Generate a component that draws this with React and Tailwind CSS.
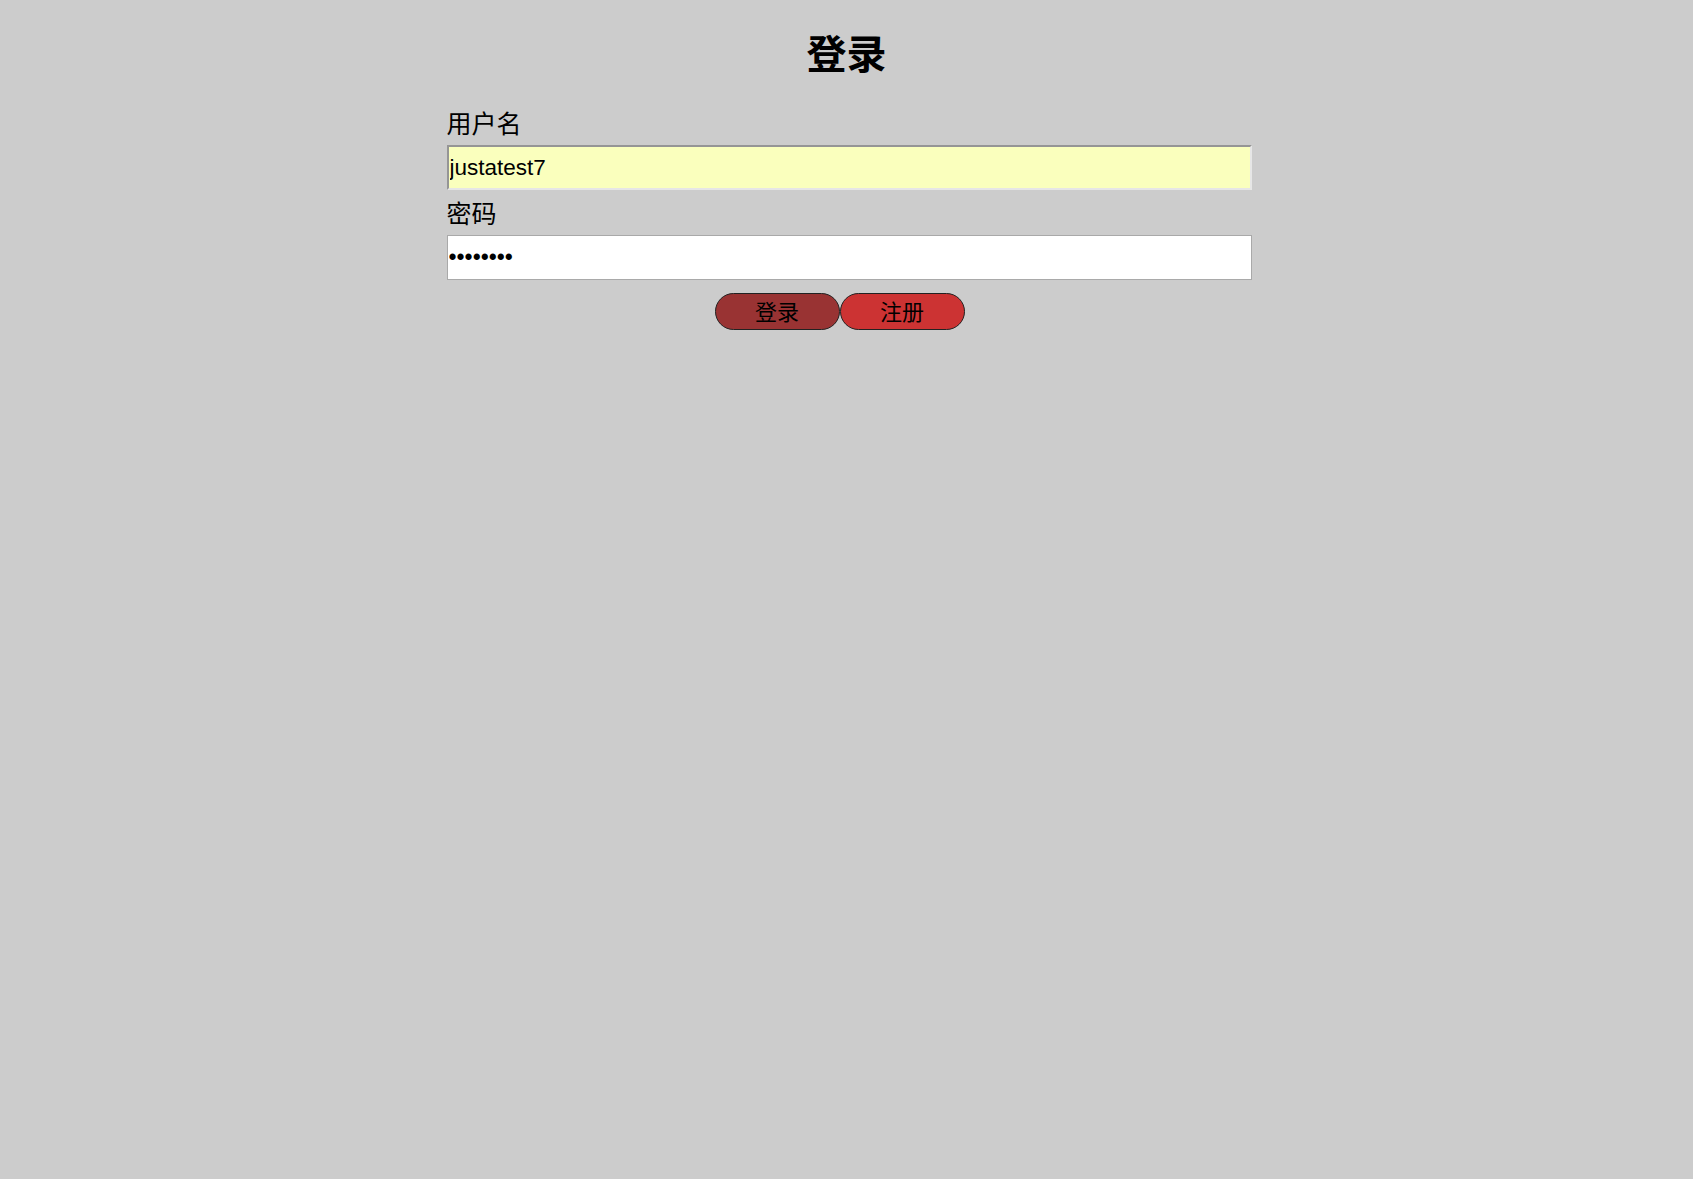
import React, { useState } from 'react';

const FONT = "font-['Liberation_Sans','Noto_Sans_CJK_SC',sans-serif]";

export default function App() {
  const [username, setUsername] = useState('justatest7');
  const [password, setPassword] = useState('12345678');

  return (
    <div className={`min-h-screen bg-[#cccccc] text-black ${FONT}`}>
      <div className="w-[800px] mx-auto pt-[31px]">
        <h1 className="text-[40px] leading-[48px] font-bold text-center">登录</h1>

        <form onSubmit={(e) => e.preventDefault()}>
          <label className="block mt-[29px] text-[25px] leading-[32px]">用户名</label>
          <input
            type="text"
            value={username}
            onChange={(e) => setUsername(e.target.value)}
            className="block mt-[5px] w-[805px] h-[45px] box-border px-[1px] bg-[#faffbd] text-[22.5px] outline-none border-2 border-t-[#959595] border-l-[#959595] border-b-[#e6e6e6] border-r-[#e6e6e6]"
          />

          <label className="block mt-[8px] text-[25px] leading-[32px]">密码</label>
          <input
            type="password"
            value={password}
            onChange={(e) => setPassword(e.target.value)}
            className="block mt-[5px] w-[805px] h-[45px] box-border px-[1px] bg-white text-[23px] outline-none border border-[#a9a9a9]"
          />

          <div className="flex justify-center pr-[14px] mt-[13px]">
            <button type="submit" className="w-[125px] h-[37px] pt-[3px] rounded-full border border-[#222222] bg-[#993333] text-[22px] leading-none text-black">
              登录
            </button>
            <button type="button" className="w-[125px] h-[37px] pt-[3px] rounded-full border border-[#222222] bg-[#cc3333] text-[22px] leading-none text-black">
              注册
            </button>
          </div>
        </form>
      </div>
    </div>
  );
}
